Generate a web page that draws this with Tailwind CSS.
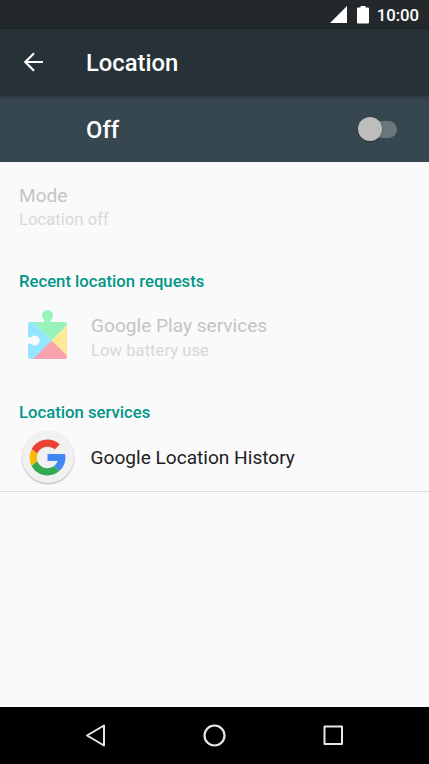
<!DOCTYPE html>
<html lang="en">
<head>
    <meta charset="UTF-8">
    <meta name="viewport" content="width=device-width, initial-scale=1.0">
    <title>Location</title>
    <script src="https://cdn.jsdelivr.net/npm/@tailwindcss/browser@4"></script>
</head>
<body class="h-[764px] w-[429px] flex flex-col overflow-hidden bg-[#fafafa] font-[Roboto,sans-serif]">
    <!-- Status bar -->
    <div class="h-[29px] shrink-0 flex items-center justify-end pr-[10px] bg-[#23282b] text-white">
        <svg class="w-[17px] h-[17px]" viewBox="0 0 17 17" fill="currentColor"><path d="M17 0v17H0z"/></svg>
        <svg class="ml-[10px] w-3 h-[18px]" viewBox="0 0 12 18" fill="currentColor"><path d="M3.500 0h5v1.500H11a1 1 0 0 1 1 1v14a1 1 0 0 1-1 1H1a1 1 0 0 1-1-1v-14a1 1 0 0 1 1-1h2.500z"/></svg>
        <span class="ml-2 pt-[2px] text-[16.7px] leading-5 font-medium">10:00</span>
    </div>

    <!-- Toolbar -->
    <header class="relative h-[67px] shrink-0 flex items-center pl-[24px] bg-[#263238] text-white shadow-[0_1px_4px_rgba(0,0,0,0.3)]">
        <svg class="mb-[2px] w-5 h-5" viewBox="0 0 20 20" fill="none" stroke="currentColor" stroke-width="2.200"><path d="M19 10H1.500M10 1.300 1.300 10l8.700 8.700"/></svg>
        <h1 class="ml-[42px] text-[23.8px] leading-7 font-medium">Location</h1>
    </header>

    <!-- Master switch -->
    <div class="h-[66px] shrink-0 flex items-center justify-between pl-[86px] pr-8 bg-[#37474f] text-white">
        <span class="pt-[2px] text-[23.8px] leading-7 font-medium">Off</span>
        <div class="w-[39px] h-6 flex items-center">
            <div class="w-6 h-6 rounded-full bg-[#bdbdbd] shadow-[0_1px_2px_rgba(0,0,0,0.3)] z-10"></div>
            <div class="-ml-3 w-[27px] h-[17px] rounded-full bg-[#69767c]"></div>
        </div>
    </div>

    <!-- Settings list -->
    <main class="grow">
        <div class="pt-[21px] pl-[19px]">
            <div class="text-[19.1px] leading-[26px] text-[#c4c4c4]">Mode</div>
            <div class="text-[16.7px] leading-[22px] text-[#d8d8d8]">Location off</div>
        </div>

        <h2 class="mt-10 pl-[19px] text-[16.7px] leading-[22px] font-medium text-[#009688]">Recent location requests</h2>
        <div class="mt-[7px] h-[76px] flex pl-[19px]">
            <svg class="mt-1 w-[57px] h-[66px]" viewBox="19 304 57 66">
                <defs>
                    <clipPath id="piece">
                        <path d="M30.500 322H44q1.200-1 .2-2.200a5.500 5.500 0 1 1 6.600 0q-1 1.200.2 2.200h13.500a2.500 2.500 0 0 1 2.500 2.500v32a2.500 2.500 0 0 1-2.500 2.500h-34a2.500 2.500 0 0 1-2.500-2.500v-12.300q1.800-1.300 3.500.1a5 5 0 1 0 0-7.600q-1.700 1.400-3.500.1v-12.300a2.500 2.500 0 0 1 2.500-2.500z"/>
                    </clipPath>
                </defs>
                <g clip-path="url(#piece)">
                    <path fill="#94e5ff" d="M28 305v55h5l18.700-19.500L33 322z"/>
                    <path fill="#96f3bb" d="M33.200 322V305H70v17.200L51.700 340.500z"/>
                    <path fill="#ffe996" d="M70 322.200v36.600L51.700 340.500z"/>
                    <path fill="#f8a2ae" d="M51.700 340.500 70 358.800V360H32.200z"/>
                </g>
            </svg>
            <div class="pt-[13px] pl-[15px]">
                <div class="text-[19.1px] leading-[26px] text-[#c4c4c4]">Google Play services</div>
                <div class="text-[16.7px] leading-6 text-[#d8d8d8]">Low battery use</div>
            </div>
        </div>

        <h2 class="mt-[26px] pl-[19px] text-[16.7px] leading-[22px] font-medium text-[#009688]">Location services</h2>
        <div class="mt-px h-[67px] flex items-center pl-[21.5px] border-b border-[#dcdcdc]">
            <div class="mb-[2px] w-[52px] h-[52px] rounded-full bg-[#f1f1f1] shadow-[0_1px_1.500px_rgba(0,0,0,0.3)] flex items-center justify-center">
                <svg class="w-[43px] h-[43px]" viewBox="0 0 48 48">
                    <path fill="#fbbc05" d="M6.306 14.691l6.571 4.819A12 12 0 0 0 12.717 28.054l-6.522 5.025A20 20 0 0 1 6.306 14.691z"/>
                    <path fill="#ea4335" d="M6.306 14.691l6.571 4.819C14.655 15.108 18.961 12 24 12c3.059 0 5.842 1.154 7.961 3.039l5.657-5.657C34.046 6.053 29.268 4 24 4 16.318 4 9.656 8.337 6.306 14.691z"/>
                    <path fill="#34a853" d="M24 44c5.166 0 9.860-1.977 13.409-5.192l-6.190-5.238C29.211 35.091 26.715 36 24 36c-5.202 0-9.619-3.317-11.283-7.946l-6.522 5.025C9.505 39.556 16.227 44 24 44z"/>
                    <path fill="#4285f4" d="M43.611 20H24v8h11.303c-.792 2.237-2.231 4.166-4.087 5.571l6.190 5.238C36.971 39.205 44 34 44 24c0-1.341-.138-2.650-.389-4z"/>
                </svg>
            </div>
            <div class="ml-[17px] text-[19.1px] leading-[26px] text-[#212121]">Google Location History</div>
        </div>
    </main>

    <!-- Navigation bar -->
    <nav class="h-[57px] shrink-0 flex items-center justify-center gap-[95px] bg-black text-[#e8e8e8]">
        <svg class="w-6 h-6" viewBox="0 0 24 24" fill="none" stroke="currentColor" stroke-width="2" stroke-linejoin="round"><path d="M20 1.500v20L3 11.500z"/></svg>
        <svg class="w-6 h-6" viewBox="0 0 24 24" fill="none" stroke="currentColor" stroke-width="2.200"><circle cx="11.500" cy="11.500" r="10"/></svg>
        <svg class="w-6 h-6" viewBox="0 0 24 24" fill="none" stroke="currentColor" stroke-width="2" stroke-linejoin="round"><path d="M2.500 2.500h17.500v17.500H2.500z"/></svg>
    </nav>
</body>
</html>
